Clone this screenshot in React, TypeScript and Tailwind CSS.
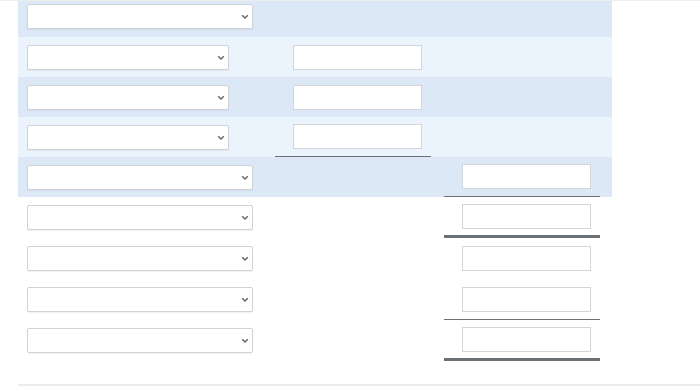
const rows = [
  { bg: "bg-[#dce8f6]", sel: "w-[226px]", mid: false, right: false, line: "" },
  { bg: "bg-[#ebf3fc]", sel: "w-[202px]", mid: true, right: false, line: "" },
  { bg: "bg-[#dce8f6]", sel: "w-[202px]", mid: true, right: false, line: "" },
  { bg: "bg-[#ebf3fc]", sel: "w-[202px]", mid: true, right: false, line: "mid" },
  { bg: "bg-[#dce8f6]", sel: "w-[226px]", mid: false, right: true, line: "right" },
  { bg: "bg-white", sel: "w-[226px]", mid: false, right: true, line: "rightDouble" },
  { bg: "bg-white", sel: "w-[226px]", mid: false, right: true, line: "" },
  { bg: "bg-white", sel: "w-[226px]", mid: false, right: true, line: "right" },
  { bg: "bg-white", sel: "w-[226px]", mid: false, right: true, line: "rightDouble" },
];

function Select({ w }: { w: string }) {
  return (
    <div className={`relative h-[25px] ${w}`}>
      <select className="h-full w-full appearance-none rounded-[2px] border border-[#cfd3d8] bg-white shadow-[0_1px_1px_rgba(0,0,0,0.06)]" />
      <svg
        className="pointer-events-none absolute right-[4px] top-[10px]"
        width="8"
        height="6"
        viewBox="0 0 8 6"
      >
        <path d="M1.2 1.2 L4 4 L6.8 1.2" fill="none" stroke="#666" strokeWidth="1.5" />
      </svg>
    </div>
  );
}

function Input() {
  return <input className="h-[25px] w-[129px] border border-[#d2d5d9] bg-white" />;
}

export default function App() {
  return (
    <div className="min-h-[387px] w-[700px] border-t border-[#eeeeee] bg-white">
      <div className="ml-[18px] w-[594px]">
        {rows.map((r, i) => (
          <div
            key={i}
            className={`flex ${r.bg} ${i === 0 ? "h-[36px] items-start pt-[3px]" : i < 5 ? "h-[40px] items-center" : "h-[41px] items-center"}`}
          >
            <div className="w-[257px] pl-[9px]">
              <Select w={r.sel} />
            </div>
            <div
              className={`flex h-full w-[156px] items-center pl-[18px] ${r.line === "mid" ? "border-b-[1.5px] border-[#6b7075]" : ""}`}
            >
              {r.mid && <Input />}
            </div>
            <div
              className={`ml-[13px] flex h-full w-[156px] items-center pl-[18px] ${
                r.line === "right"
                  ? "border-b-[1.5px] border-[#6b7075]"
                  : r.line === "rightDouble"
                  ? "border-b-[3px] border-[#6b7075]"
                  : ""
              }`}
            >
              {r.right && <Input />}
            </div>
          </div>
        ))}
      </div>
      <div className="ml-[18px] mt-[23px] h-[2px] w-[682px] bg-[#ececec]" />
    </div>
  );
}
